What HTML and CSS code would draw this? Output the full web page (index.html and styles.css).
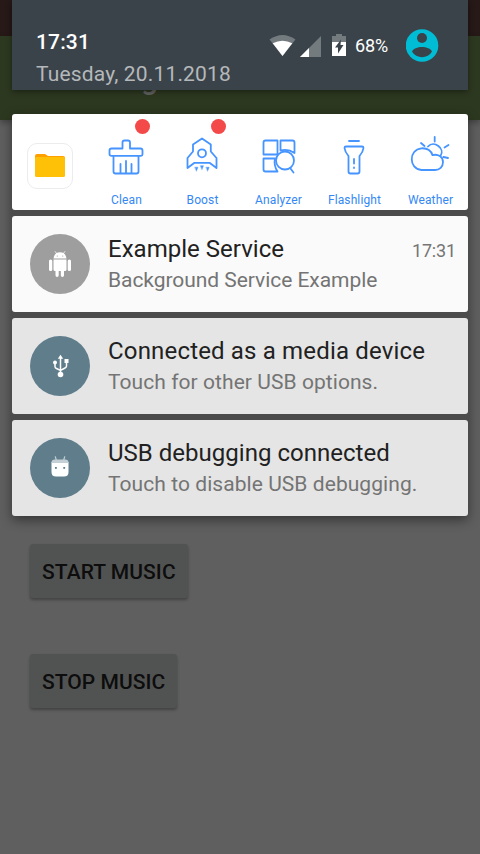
FILE: index.html
```html
<!DOCTYPE html>
<html lang="en">
<head>
<meta charset="utf-8">
<title>Notifications</title>
<link rel="stylesheet" href="styles.css">
</head>
<body>
<div class="screen">
  <div class="app">
    <div class="app-status"></div>
    <div class="app-toolbar"><span class="app-title">g</span></div>
    <main class="app-content">
      <button class="btn">START MUSIC</button>
      <button class="btn">STOP MUSIC</button>
    </main>
  </div>

  <div class="shade">
    <header class="header">
      <div class="when">
        <div class="clock">17:31</div>
        <div class="date">Tuesday, 20.11.2018</div>
      </div>
      <div class="status">
        <svg class="status-icons" viewBox="268 28 80 32" width="80" height="32">
          <path d="M269.500 38.600Q282.500 29.400 295.500 38.600L282.500 55Z" fill="#737b7f"/>
          <path d="M272.700 42.200Q282.500 37.200 292.300 42.200L282.500 55Z" fill="#fff"/>
          <path d="M321 35V56H300Z" fill="#737b7f"/>
          <path d="M309 47V56H300Z" fill="#fff"/>
          <path d="M332 41V35H336V33H342V35H346V41Z" fill="#737b7f"/>
          <path d="M332 41H346V55H332Z" fill="#fff"/>
          <path d="M341 38.500L335 46.500H338V52.500L343.500 44H340.500Z" fill="#3b434a"/>
        </svg>
        <span class="percent">68%</span>
        <svg class="avatar" viewBox="0 0 33 33" width="33" height="33">
          <circle cx="16" cy="16.500" r="16.300" fill="#00bcd4"/>
          <circle cx="16" cy="9" r="5" fill="#3b434a"/>
          <path d="M6 22.500C8.500 16.500 23.500 16.500 26 22.500C22 30 10 30 6 22.500Z" fill="#3b434a"/>
        </svg>
      </div>
    </header>

    <section class="cards">
      <article class="card tools">
        <div class="folder">
          <svg viewBox="0 0 30 23" width="30" height="23">
            <path d="M0 2Q0 0 2 0H10L13 2H28Q30 2 30 4V10H0Z" fill="#ffa000"/>
            <rect y="3" width="30" height="20" rx="1.500" fill="#ffc107"/>
          </svg>
        </div>
        <div class="tool">
          <svg viewBox="106 134 40 44" width="40" height="44">
            <path d="M113.500 156V171.500Q113.500 173.500 115.500 173.500H136.500Q138.500 173.500 138.500 171.500V156M111.500 155.800H141Q142.500 155.800 142.500 154.300V150.500Q142.500 148.500 140.500 148.500H130V142.500Q130 140.500 128 140.500H124.500Q122.500 140.500 122.500 142.500V148.500H111.500Q109.500 148.500 109.500 150.500V154Q109.500 155.800 111.500 155.800M120.500 164V173M126 161V173M131.500 164V173"/>
          </svg>
          <span class="label">Clean</span><i class="dot"></i>
        </div>
        <div class="tool">
          <svg viewBox="182 134 40 44" width="40" height="44">
            <path d="M187.500 168V158L193 151.500V144.500L202 138.500L210.800 144.500V151.500L216.500 158V168L209.500 162.800H194.500Z"/>
            <circle cx="202" cy="153.300" r="4"/>
            <path class="flame" d="M195 167.200H198L196.500 171ZM200.500 165.700H203.500L202 169.500ZM206.200 167.200H209.200L207.700 171Z"/>
          </svg>
          <span class="label">Boost</span><i class="dot"></i>
        </div>
        <div class="tool">
          <svg viewBox="258 134 40 44" width="40" height="44">
            <path d="M265.500 140.500H277.500V154.500H263.500V142.500Q263.500 140.500 265.500 140.500ZM280.500 150.500V140.500H292.500Q294.500 140.500 294.500 142.500V152.800M280.500 150.500Q288 148.500 294.500 153M275 158.500H263.500V169.500Q263.500 171.500 265.500 171.500H277.500Q273.500 165.500 275 158.500M290.500 168.500L293.500 172.500"/>
            <circle cx="285" cy="160.500" r="9"/>
          </svg>
          <span class="label">Analyzer</span>
        </div>
        <div class="tool">
          <svg viewBox="334 134 40 44" width="40" height="44">
            <path d="M349 141H359M344.500 148Q344.500 146.500 346 146.500H362Q363.500 146.500 363.500 148Q363 152 359.500 156V171.500Q359.500 173.500 357.500 173.500H350.500Q348.500 173.500 348.500 171.500V156Q345 152 344.500 148ZM354 159V163.500M354 167.500V168"/>
          </svg>
          <span class="label">Flashlight</span>
        </div>
        <div class="tool">
          <svg viewBox="410 134 40 44" width="40" height="44">
            <path d="M421.500 170C408.500 169 408.500 149.500 421.500 148.300C427 148 431 150.500 432.500 155.200C438 153.500 443 157 443 162C443 167 439.500 170 435 170ZM428 146.500C434 140 445.500 148.500 440.500 156M434.700 137V141.500M421 143L424.500 146M444.500 147.500L448.500 145M443.500 157L448 158"/>
          </svg>
          <span class="label">Weather</span>
        </div>
      </article>

      <article class="card note fresh">
        <div class="badge gray">
          <svg viewBox="46 248 28 32" width="28" height="32" fill="#fff">
            <path d="M53.500 258.500Q54 252.800 60 252.300Q66 252.800 66.500 258.500ZM53.500 259.500H66.500V269.500Q66.500 271 65 271H64V275.300Q64 277 62.400 277T60.800 275.300V271H58.700V275.300Q58.700 277 57.100 277T55.500 275.300V271H55Q53.500 271 53.500 269.500Z"/>
            <rect x="49" y="259.500" width="3.300" height="11.500" rx="1.600"/>
            <rect x="67.700" y="259.500" width="3.300" height="11.500" rx="1.600"/>
            <path d="M55 251.300L57 254M65 251.300L63 254" stroke="#fff" stroke-width=".8"/>
            <circle cx="57.300" cy="256" r=".6" fill="#9e9e9e"/><circle cx="62.700" cy="256" r=".6" fill="#9e9e9e"/>
          </svg>
        </div>
        <div class="body">
          <div class="row"><span class="title">Example Service</span><span class="time">17:31</span></div>
          <div class="sub sub-tight">Background Service Example</div>
        </div>
      </article>

      <article class="card note">
        <div class="badge">
          <svg viewBox="46 350 28 32" width="28" height="32" fill="#fff">
            <path d="M60.500 373V357M55 363V366.500Q55 368 56.500 368.500L60.500 370.500L65 368Q66.500 367.300 66.500 366V362" fill="none" stroke="#fff" stroke-width="1.500"/>
            <path d="M57.800 358.800L60.500 354.700L63.200 358.800Z"/>
            <circle cx="55" cy="362.500" r="2"/><circle cx="60.500" cy="374.500" r="2.800"/>
            <rect x="64.500" y="359" width="4" height="4"/>
          </svg>
        </div>
        <div class="body">
          <div class="row"><span class="title title-wide">Connected as a media device</span></div>
          <div class="sub">Touch for other USB options.</div>
        </div>
      </article>

      <article class="card note">
        <div class="badge">
          <svg viewBox="46 452 28 32" width="28" height="32" fill="#fff">
            <path d="M51.500 462H68.500V472Q68.500 476.500 64 476.500H56Q51.500 476.500 51.500 472Z"/>
            <path d="M51.700 461.500Q52 459.700 54.500 459.500H65.500Q68 459.700 68.300 461.500V463H51.700Z" fill="#c4d0d6"/>
            <path d="M55.200 456.300L56.300 460M64.800 456.300L63.700 460" stroke="#c4d0d6" stroke-width="1.200"/>
            <rect x="55" y="467" width="1.800" height="1.800" fill="#607d8b"/><rect x="63.300" y="467" width="1.800" height="1.800" fill="#607d8b"/>
          </svg>
        </div>
        <div class="body">
          <div class="row"><span class="title">USB debugging connected</span></div>
          <div class="sub">Touch to disable USB debugging.</div>
        </div>
      </article>
    </section>
  </div>
</div>
</body>
</html>
```
FILE: styles.css
```css
* { box-sizing: border-box; }
body { margin: 0; font-family: Roboto, "Liberation Sans", sans-serif; }
.screen { position: relative; width: 480px; height: 854px; overflow: hidden; background: #5f5f5f; }

.app-status { height: 36px; background: #261917; }
.app-toolbar { height: 84px; padding: 25px 0 0 141px; background: #2d3820; box-shadow: 0 3px 6px rgba(0, 0, 0, .3); }
.app-title { display: block; font-size: 30px; font-weight: 500; line-height: 36px; color: #636363; }
.app-content { display: flex; flex-direction: column; align-items: flex-start; gap: 56px; padding: 424px 30px 0; }
.btn { height: 54px; padding: 2px 12px 0; border: 0; border-radius: 3px; background: #515352; color: #0d0d0d; font: 500 21px/52px Roboto, "Liberation Sans", sans-serif; letter-spacing: .06px; white-space: nowrap; box-shadow: 0 2px 3px rgba(0, 0, 0, .3); }

.shade { position: absolute; inset: 0; padding: 0 12px; }
.header { display: flex; justify-content: space-between; height: 90px; padding: 0 29px 0 24px; background: #3b434a; box-shadow: 0 2px 6px rgba(0, 0, 0, .4); }
.when { padding-top: 26px; white-space: nowrap; }
.clock { font-size: 21px; font-weight: 500; line-height: 32px; letter-spacing: .15px; color: #fff; }
.date { font-size: 21px; line-height: 32px; letter-spacing: .16px; color: #b5b8ba; }
.status { display: flex; align-items: center; height: 34px; margin-top: 28px; }
.status-icons { margin-right: 7px; }
.percent { width: 34px; padding-top: 1px; font-size: 18px; line-height: 34px; letter-spacing: -.1px; color: #fff; }
.avatar { margin-left: 17px; }

.cards { display: grid; gap: 6px; margin-top: 24px; background: #4b4b4b; border-radius: 3px; box-shadow: 0 4px 12px rgba(0, 0, 0, .45); }
.card { height: 96px; border-radius: 3px; background: #e5e5e5; }
.tools { display: flex; background: #fff; }
.folder { display: flex; align-items: center; justify-content: center; width: 46px; height: 46px; margin: 29px 15px 0; padding-bottom: 1px; border: 1px solid #ececec; border-radius: 10px; flex: none; }
.tool { position: relative; display: flex; flex-direction: column; align-items: center; width: 76px; padding-top: 20px; flex: none; }
.tool svg { fill: none; stroke: #4594ff; stroke-width: 1.8; stroke-linecap: round; stroke-linejoin: round; }
.tool .flame { fill: #4594ff; stroke-width: .4; }
.label { margin-top: 14px; padding-left: 1px; font-size: 12px; line-height: 16px; letter-spacing: .12px; color: #3488f5; white-space: nowrap; }
.dot { position: absolute; left: 47px; top: 5px; width: 15px; height: 15px; border-radius: 50%; background: #f44949; }

.note { display: flex; align-items: center; padding: 0 12px 0 18px; }
.fresh { background: #fafafa; }
.badge { display: flex; align-items: center; justify-content: center; width: 60px; height: 60px; margin-right: 18px; border-radius: 50%; background: #607d8b; flex: none; }
.gray { background: #9e9e9e; }
.body { flex: 1; white-space: nowrap; }
.row { display: flex; justify-content: space-between; align-items: baseline; }
.title { font-size: 24px; line-height: 32px; letter-spacing: .02px; color: #212121; }
.title-wide { letter-spacing: .17px; }
.time { font-size: 18px; line-height: 24px; letter-spacing: -.15px; color: #757575; }
.sub { font-size: 21px; line-height: 30px; letter-spacing: .06px; color: #747474; }
.sub-tight { letter-spacing: -.05px; }
```
